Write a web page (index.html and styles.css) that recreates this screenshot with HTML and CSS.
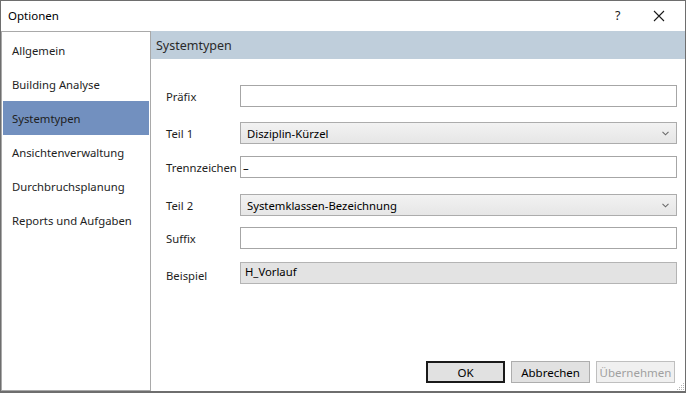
FILE: index.html
```html
<!DOCTYPE html>
<html lang="de">
<head>
<meta charset="utf-8">
<title>Optionen</title>
<link rel="stylesheet" href="styles.css">
</head>
<body>
<div class="window">
  <div class="titlebar">
    <span class="title">Optionen</span>
    <span class="help">?</span>
    <span class="close"><svg width="12" height="12" viewBox="0 0 12 12"><path d="M1 1 L11 11 M11 1 L1 11" stroke="#1a1a1a" stroke-width="1.1" fill="none"/></svg></span>
  </div>
  <div class="main">
    <nav class="sidebar">
      <div class="nav-item">Allgemein</div>
      <div class="nav-item">Building Analyse</div>
      <div class="nav-item active">Systemtypen</div>
      <div class="nav-item">Ansichtenverwaltung</div>
      <div class="nav-item">Durchbruchsplanung</div>
      <div class="nav-item">Reports und Aufgaben</div>
    </nav>
    <section class="panel">
      <div class="panel-header">Systemtypen</div>
      <div class="form">
        <label class="lbl">Präfix</label>
        <div class="field input"></div>
        <label class="lbl">Teil 1</label>
        <div class="field select"><span>Disziplin-Kürzel</span><svg class="chev" width="7" height="5" viewBox="0 0 7 5"><path d="M0.5 0.8 L3.5 3.8 L6.5 0.8" stroke="#6a6a6a" stroke-width="1.1" fill="none"/></svg></div>
        <label class="lbl">Trennzeichen</label>
        <div class="field input"><span class="val">–</span></div>
        <label class="lbl">Teil 2</label>
        <div class="field select"><span>Systemklassen-Bezeichnung</span><svg class="chev" width="7" height="5" viewBox="0 0 7 5"><path d="M0.5 0.8 L3.5 3.8 L6.5 0.8" stroke="#6a6a6a" stroke-width="1.1" fill="none"/></svg></div>
        <label class="lbl">Suffix</label>
        <div class="field input"></div>
        <label class="lbl lbl-low">Beispiel</label>
        <div class="field readonly"><span>H_Vorlauf</span></div>
      </div>
      <div class="buttons">
        <button class="btn default">OK</button>
        <button class="btn">Abbrechen</button>
        <button class="btn disabled">Übernehmen</button>
      </div>
      <svg class="grip" width="10" height="10" viewBox="0 0 10 10">
        <g fill="#b5b5b5">
          <rect x="8" y="2" width="1" height="1"/>
          <rect x="6" y="4" width="1" height="1"/><rect x="8" y="4" width="1" height="1"/>
          <rect x="4" y="6" width="1" height="1"/><rect x="6" y="6" width="1" height="1"/><rect x="8" y="6" width="1" height="1"/>
          <rect x="2" y="8" width="1" height="1"/><rect x="4" y="8" width="1" height="1"/><rect x="6" y="8" width="1" height="1"/><rect x="8" y="8" width="1" height="1"/>
        </g>
      </svg>
    </section>
  </div>
</div>
</body>
</html>
```

FILE: styles.css
```css
* { box-sizing: border-box; }
html, body { margin: 0; padding: 0; background: #ffffff; }
body {
  font-family: "Noto Sans", "DejaVu Sans", sans-serif;
  font-size: 11.3px;
  color: #1e1e1e;
}
.window {
  width: 686px;
  height: 393px;
  border: 1px solid #6e6e6e;
  border-bottom: 2px solid #6e6e6e;
  background: #fff;
  display: flex;
  flex-direction: column;
  overflow: hidden;
}
.titlebar {
  height: 30px;
  display: flex;
  align-items: center;
  padding-left: 7px;
  flex-shrink: 0;
}
.title { flex: 1; color: #000; font-size: 11.5px; margin-top: -1px; }
.help { width: 38px; text-align: left; font-size: 12.5px; color: #1a1a1a; margin-top: -2px; }
.close { width: 32px; display: flex; align-items: center; margin-top: -1px; }
.main {
  flex: 1;
  display: flex;
  min-height: 0;
}
.sidebar {
  width: 150px;
  border: 1px solid #a9a9a9;
  padding: 1px;
  flex-shrink: 0;
}
.nav-item {
  height: 34px;
  line-height: 35px;
  padding-left: 9px;
  color: #1e1e1e;
  white-space: nowrap;
}
.nav-item.active { background: #7290bf; }
.panel {
  flex: 1;
  display: flex;
  flex-direction: column;
  position: relative;
}
.panel-header {
  height: 28px;
  background: #bfcedb;
  padding-left: 5px;
  line-height: 29px;
  font-size: 12.5px;
  color: #2a2a2a;
}
.form {
  display: grid;
  grid-template-columns: 74px 1fr;
  grid-template-rows: 37px 34px 38px 33px 35px 22px;
  padding: 26px 8px 0 15px;
  align-items: start;
}
.lbl { color: #1e1e1e; white-space: nowrap; line-height: 24px; }
.lbl-low { line-height: 28px; }
.field {
  height: 22px;
  border: 1px solid #a6a6a6;
  display: flex;
  align-items: center;
  padding-left: 4px;
  color: #000;
}
.field.input { background: #fff; padding-left: 2px; }
.field.select {
  background: linear-gradient(#f2f2f2, #e6e6e6);
  border-color: #acacac;
  padding-left: 6px;
  justify-content: space-between;
  padding-right: 7px;
}
.field.readonly {
  background: #e3e3e3;
  border-color: #b4b4b4;
  align-items: flex-start;
  padding-top: 1px;
}
.chev { margin-top: 1px; }
.buttons {
  margin-top: auto;
  display: flex;
  justify-content: flex-end;
  gap: 6px;
  padding: 0 10px 8px 0;
}
.btn {
  width: 79px;
  height: 22px;
  font-family: inherit;
  font-size: 11.5px;
  background: #e1e1e1;
  border: 1px solid #adadad;
  color: #000;
  padding: 0;
}
.btn.default { border: 2px solid #1a1a1a; }
.btn.disabled { color: #a0a0a0; background: #f0f0f0; border-color: #bfbfbf; }
.grip { position: absolute; right: 0; bottom: 0; }
```
